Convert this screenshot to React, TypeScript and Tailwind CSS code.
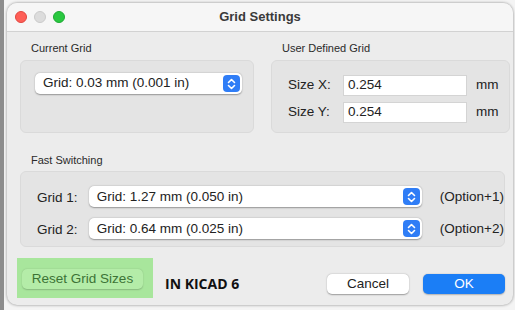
const font = { fontFamily: '"Liberation Sans", Arial, sans-serif' };

function Stepper() {
  return (
    <div className="flex h-[17px] w-[17px] items-center justify-center rounded-[4px] bg-[#2f7df6]">
      <svg width="9" height="12" viewBox="0 0 9 12" fill="none" stroke="white" strokeWidth="1.6" strokeLinecap="round" strokeLinejoin="round">
        <path d="M1.5 4.5 L4.5 1.5 L7.5 4.5" />
        <path d="M1.5 7.5 L4.5 10.5 L7.5 7.5" />
      </svg>
    </div>
  );
}

function Select({ label, width }: { label: string; width: string }) {
  return (
    <div className={`flex h-[21px] items-center justify-between rounded-[5px] bg-white pl-[8px] pr-[2px] shadow-[0_0.5px_1.5px_rgba(0,0,0,0.35)] ${width}`}>
      <span className="text-[13.5px] text-[#222]">{label}</span>
      <Stepper />
    </div>
  );
}

function Input({ value }: { value: string }) {
  return (
    <div className="flex h-[21px] w-[124px] items-center border border-[#d4d4d4] bg-white pl-[4px] text-[13.5px] text-[#222]">
      {value}
    </div>
  );
}

export default function App() {
  return (
    <div className="flex h-[310px] w-[515px] bg-[#f4f4f4]" style={font}>
      <div className="w-[4px] bg-[#8d8d8d]" />
      <div className="ml-[3px] mt-[3px] flex h-[302px] w-[506px] flex-col overflow-hidden rounded-[10px] bg-[#ececec] shadow-[0_0_3px_rgba(0,0,0,0.45)]">
        {/* title bar */}
        <div className="relative flex h-[29px] items-center justify-center border-b border-[#d2d2d2] bg-[#f6f6f6]">
          <div className="absolute left-[8px] top-[8px] flex gap-[7px]">
            <div className="h-[12px] w-[12px] rounded-full bg-[#fe5f57] border border-[#e1463f]" />
            <div className="h-[12px] w-[12px] rounded-full bg-[#dcdcdc] border border-[#cacaca]" />
            <div className="h-[12px] w-[12px] rounded-full bg-[#2ac840] border border-[#1ea934]" />
          </div>
          <span className="text-[13px] font-bold text-[#3a3a3a]">Grid Settings</span>
        </div>

        {/* top row */}
        <div className="ml-[13px] mt-[9px] flex gap-[17px]">
          <div className="flex flex-col">
            <span className="ml-[11px] h-[19px] text-[11px] leading-[14px] text-[#2a2a2a]">Current Grid</span>
            <div className="h-[73px] w-[234px] rounded-[6px] border border-[#dadada] bg-[#e4e4e4] pl-[14px] pt-[12px]">
              <Select label="Grid: 0.03 mm (0.001 in)" width="w-[207px]" />
            </div>
          </div>
          <div className="flex flex-col">
            <span className="ml-[11px] h-[19px] text-[11px] leading-[14px] text-[#2a2a2a]">User Defined Grid</span>
            <div className="flex h-[73px] w-[239px] flex-col gap-[6px] rounded-[6px] border border-[#dadada] bg-[#e4e4e4] pl-[16px] pt-[14px]">
              <div className="flex items-center">
                <span className="w-[55px] text-[13.5px] text-[#222]">Size X:</span>
                <Input value="0.254" />
                <span className="ml-[9px] text-[13.5px] text-[#222]">mm</span>
              </div>
              <div className="flex items-center">
                <span className="w-[55px] text-[13.5px] text-[#222]">Size Y:</span>
                <Input value="0.254" />
                <span className="ml-[9px] text-[13.5px] text-[#222]">mm</span>
              </div>
            </div>
          </div>
        </div>

        {/* fast switching */}
        <div className="ml-[13px] mt-[20px] flex flex-col">
          <span className="ml-[11px] h-[18px] text-[11px] leading-[14px] text-[#2a2a2a]">Fast Switching</span>
          <div className="flex h-[76px] w-[485px] flex-col gap-[9px] rounded-[6px] border border-[#dadada] bg-[#e4e4e4] pl-[16px] pt-[13px]">
            <div className="flex items-center">
              <span className="w-[52px] pt-[3px] text-[13.5px] text-[#222]">Grid 1:</span>
              <Select label="Grid: 1.27 mm (0.050 in)" width="w-[335px]" />
              <span className="ml-[18px] text-[13.5px] text-[#222]">(Option+1)</span>
            </div>
            <div className="flex items-center">
              <span className="w-[52px] pt-[3px] text-[13.5px] text-[#222]">Grid 2:</span>
              <Select label="Grid: 0.64 mm (0.025 in)" width="w-[335px]" />
              <span className="ml-[18px] text-[13.5px] text-[#222]">(Option+2)</span>
            </div>
          </div>
        </div>

        {/* bottom row */}
        <div className="ml-[10px] mt-[11px] flex items-start">
          <div className="flex h-[40px] w-[136px] items-start bg-[#a8e69c] pl-[5px] pt-[11px]">
            <div className="flex h-[20px] w-[121px] items-center justify-center rounded-[5px] bg-[#b4eca8] text-[13.5px] text-[#3c7336] shadow-[0_0.5px_1.5px_rgba(0,0,0,0.2)]">
              Reset Grid Sizes
            </div>
          </div>
          <span className="ml-[12px] mt-[17px] text-[14px] font-bold leading-[18px] text-[#111]" style={{ fontFamily: '"Open Sans", sans-serif' }}>
            IN KICAD 6
          </span>
          <div className="ml-auto mr-[8px] mt-[16px] flex gap-[14px]">
            <div className="flex h-[20px] w-[82px] items-center justify-center rounded-[5px] bg-white text-[13.5px] text-[#222] shadow-[0_0.5px_1.5px_rgba(0,0,0,0.35)]">
              Cancel
            </div>
            <div className="flex h-[20px] w-[82px] items-center justify-center rounded-[5px] bg-[#1b7ef6] text-[13.5px] text-white shadow-[0_0.5px_1.5px_rgba(0,0,0,0.25)]">
              OK
            </div>
          </div>
        </div>
      </div>
    </div>
  );
}
